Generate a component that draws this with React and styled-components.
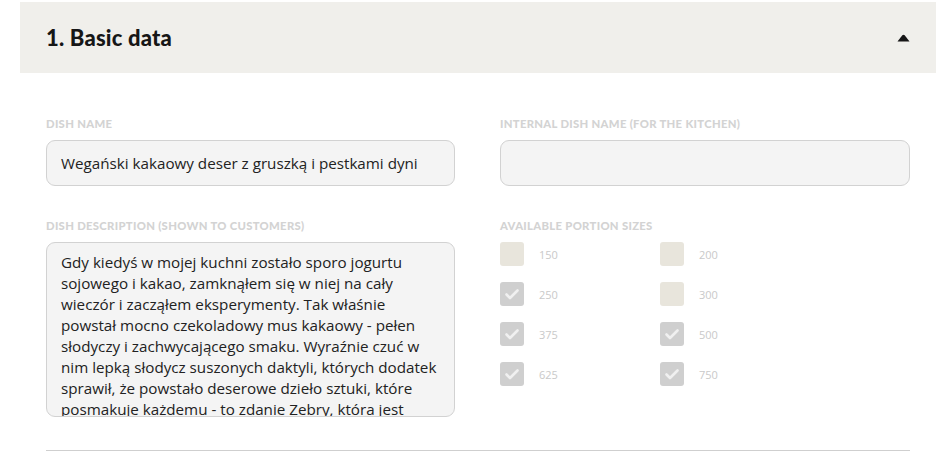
import React from 'react';
import styled, { createGlobalStyle } from 'styled-components';

const GlobalStyle = createGlobalStyle`
    body {
        margin: 0;
        background: #ffffff;
        font-family: "Open Sans", Lato, sans-serif;
    }
`;

const Page = styled.div`
    padding: 2px 9px 0 20px;
`;

const Header = styled.div`
    display: flex;
    align-items: center;
    justify-content: space-between;
    height: 71px;
    padding: 0 26px;
    background: #f0efeb;
`;

const Title = styled.h2`
    margin: 0;
    font-family: Lato, sans-serif;
    font-weight: 900;
    font-size: 22px;
    color: #161616;
    letter-spacing: 0.2px;
`;

const Body = styled.div`
    padding: 45px 26px 0 26px;
`;

const Grid = styled.div`
    display: grid;
    grid-template-columns: 409px 410px;
    column-gap: 45px;
    row-gap: 34px;
    padding-bottom: 33px;
    border-bottom: 1px solid #cfcfcf;
    width: 864px;
`;

const Field = styled.div`
    display: flex;
    flex-direction: column;
`;

const Label = styled.label`
    font-family: Lato, sans-serif;
    font-weight: 900;
    font-size: 11.3px;
    line-height: 12px;
    letter-spacing: 0.3px;
    text-transform: uppercase;
    color: #d3d3d3;
    margin-bottom: 10px;
`;

const Input = styled.div`
    box-sizing: border-box;
    height: 46px;
    padding: 0 14px;
    display: flex;
    align-items: center;
    background: #f4f4f4;
    border: 1px solid #d2d2d2;
    border-radius: 9px;
    font-family: "Open Sans", sans-serif;
    font-size: 15.2px;
    color: #222;
`;

const TextArea = styled.div`
    box-sizing: border-box;
    height: 175px;
    padding: 9px 14px 0 14px;
    background: #f4f4f4;
    border: 1px solid #d2d2d2;
    border-radius: 9px;
    overflow: hidden;
    font-family: "Open Sans", sans-serif;
    font-size: 15.2px;
    line-height: 21px;
    color: #222;
`;

const Line = styled.div`
    white-space: nowrap;
`;

const Portions = styled.div`
    display: grid;
    grid-template-columns: 160px 160px;
    row-gap: 16px;
`;

const Portion = styled.div`
    display: flex;
    align-items: center;
    gap: 15px;
    font-family: "Open Sans", sans-serif;
    font-size: 11px;
    color: #c9c9c9;
`;

const Box = styled.span`
    display: flex;
    align-items: center;
    justify-content: center;
    width: 24px;
    height: 24px;
    border-radius: 3px;
    background: ${p => (p.$checked ? '#cfcfcf' : '#e8e5dc')};
`;

const Caret = () => (
    <svg width="13" height="8" viewBox="0 0 13 8">
        <path d="M0.5 7.5 L5.3 1.3 Q6.5 0 7.7 1.3 L12.5 7.5 Z" fill="#161616" />
    </svg>
);

const Check = () => (
    <svg width="14" height="11" viewBox="0 0 14 11">
        <path d="M1.5 5.5 L5 9 L12.5 1.5" stroke="#f0f0f0" strokeWidth="2.6" fill="none" strokeLinecap="round" strokeLinejoin="round" />
    </svg>
);

const portions = [
    { size: 150, checked: false },
    { size: 200, checked: false },
    { size: 250, checked: true },
    { size: 300, checked: false },
    { size: 375, checked: true },
    { size: 500, checked: true },
    { size: 625, checked: true },
    { size: 750, checked: true },
];

const descriptionLines = [
    'Gdy kiedyś w mojej kuchni zostało sporo jogurtu',
    'sojowego i kakao, zamknąłem się w niej na cały',
    'wieczór i zacząłem eksperymenty. Tak właśnie',
    'powstał mocno czekoladowy mus kakaowy - pełen',
    'słodyczy i zachwycającego smaku. Wyraźnie czuć w',
    'nim lepką słodycz suszonych daktyli, których dodatek',
    'sprawił, że powstało deserowe dzieło sztuki, które',
    'posmakuje każdemu - to zdanie Zebry, która jest',
];

export default function App() {
    return (
        <Page>
            <GlobalStyle />
            <Header>
                <Title>1. Basic data</Title>
                <Caret />
            </Header>
            <Body>
                <Grid>
                    <Field>
                        <Label>Dish name</Label>
                        <Input>Wegański kakaowy deser z gruszką i pestkami dyni</Input>
                    </Field>
                    <Field>
                        <Label>Internal dish name (for the kitchen)</Label>
                        <Input />
                    </Field>
                    <Field>
                        <Label>Dish description (shown to customers)</Label>
                        <TextArea>
                            {descriptionLines.map(line => (
                                <Line key={line}>{line}</Line>
                            ))}
                        </TextArea>
                    </Field>
                    <Field>
                        <Label>Available portion sizes</Label>
                        <Portions>
                            {portions.map(p => (
                                <Portion key={p.size}>
                                    <Box $checked={p.checked}>{p.checked && <Check />}</Box>
                                    {p.size}
                                </Portion>
                            ))}
                        </Portions>
                    </Field>
                </Grid>
            </Body>
        </Page>
    );
}
